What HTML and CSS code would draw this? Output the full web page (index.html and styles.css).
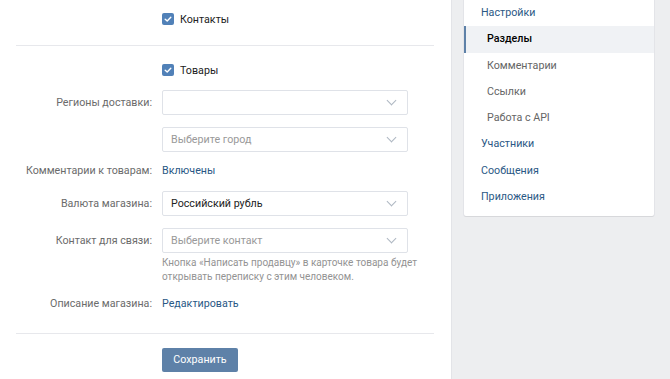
FILE: index.html
```html
<!DOCTYPE html>
<html lang="ru">
<head>
  <meta charset="UTF-8" />
  <meta name="viewport" content="width=device-width, initial-scale=1" />
  <title>Управление сообществом — Разделы</title>
  <link rel="stylesheet" href="styles.css">
</head>
<body>
  <div class="page">
    <div class="main">
      <div class="row row-check">
        <div class="label"></div>
        <div class="field">
          <span class="checkbox"><svg viewBox="0 0 12 12" width="12" height="12"><path d="M3.2 6.2l2 1.9 3.6-3.8" fill="none" stroke="#fff" stroke-width="1.4" stroke-linecap="round" stroke-linejoin="round"/></svg></span>
          <span class="check-text">Контакты</span>
        </div>
      </div>

      <div class="sep sep-top"></div>

      <div class="row row-check row-goods">
        <div class="label"></div>
        <div class="field">
          <span class="checkbox"><svg viewBox="0 0 12 12" width="12" height="12"><path d="M3.2 6.2l2 1.9 3.6-3.8" fill="none" stroke="#fff" stroke-width="1.4" stroke-linecap="round" stroke-linejoin="round"/></svg></span>
          <span class="check-text">Товары</span>
        </div>
      </div>

      <div class="row row-regions">
        <div class="label">Регионы доставки:</div>
        <div class="field">
          <div class="select"><span class="select-text"></span><span class="arrow"></span></div>
        </div>
      </div>

      <div class="row row-city">
        <div class="label"></div>
        <div class="field">
          <div class="select"><span class="select-text placeholder">Выберите город</span><span class="arrow"></span></div>
        </div>
      </div>

      <div class="row row-comments">
        <div class="label">Комментарии к товарам:</div>
        <div class="field"><a class="link" href="#">Включены</a></div>
      </div>

      <div class="row row-currency">
        <div class="label">Валюта магазина:</div>
        <div class="field">
          <div class="select"><span class="select-text">Российский рубль</span><span class="arrow"></span></div>
        </div>
      </div>

      <div class="row row-contact">
        <div class="label">Контакт для связи:</div>
        <div class="field">
          <div class="select"><span class="select-text placeholder">Выберите контакт</span><span class="arrow"></span></div>
        </div>
      </div>

      <div class="row row-hint">
        <div class="label"></div>
        <div class="hint">Кнопка «Написать продавцу» в карточке товара будет<br>открывать переписку с этим человеком.</div>
      </div>

      <div class="row row-desc">
        <div class="label">Описание магазина:</div>
        <div class="field"><a class="link" href="#">Редактировать</a></div>
      </div>

      <div class="sep sep-bottom"></div>

      <div class="row row-save">
        <div class="label"></div>
        <div class="field"><button class="btn">Сохранить</button></div>
      </div>
    </div>

    <div class="side">
      <div class="menu">
        <a class="menu-item" href="#">Настройки</a>
        <a class="menu-item sub active" href="#">Разделы</a>
        <a class="menu-item sub" href="#">Комментарии</a>
        <a class="menu-item sub" href="#">Ссылки</a>
        <a class="menu-item sub" href="#">Работа с API</a>
        <a class="menu-item" href="#">Участники</a>
        <a class="menu-item" href="#">Сообщения</a>
        <a class="menu-item" href="#">Приложения</a>
      </div>
    </div>
  </div>
</body>
</html>
```

FILE: styles.css
```css
body {
  margin: 0;
  background: #edeef0;
  font-family: Roboto, "Open Sans", Arial, sans-serif;
  font-size: 10.7px;
  color: #000;
  overflow: hidden;
}

.page {
  display: flex;
  align-items: flex-start;
  height: 379px;
}

/* === Основная панель === */
.main {
  width: 452px;
  height: 379px;
  background: #fff;
  border-right: 1px solid #e3e4e8;
  box-sizing: border-box;
  padding-top: 6px;
}

.row {
  display: flex;
  align-items: center;
  min-height: 25px;
}

.label {
  width: 162px;
  padding-right: 10px;
  box-sizing: border-box;
  text-align: right;
  color: #6b6b6b;
  flex-shrink: 0;
}

.field {
  width: 246px;
  display: flex;
  align-items: center;
}

.row-check { height: 26px; }
.row-goods { margin-top: 11px; }
.row-regions { margin-top: 7px; }
.row-city { margin-top: 12px; }
.row-comments { margin-top: 6px; }
.row-currency { margin-top: 8px; }
.row-contact { margin-top: 12px; }
.row-hint { margin-top: 3px; min-height: 0; }
.row-desc { margin-top: 7px; }
.row-save { margin-top: 13px; }

.sep {
  height: 1px;
  background: #e7e8ec;
  margin: 0 17px 0 16px;
}
.sep-top { margin-top: 13px; }
.sep-bottom { margin-top: 17px; }

.checkbox {
  width: 12px;
  height: 12px;
  border-radius: 2px;
  background: #5181b8;
  display: inline-flex;
  margin-right: 6px;
}

.check-text {
  color: #222;
}

.select {
  width: 246px;
  height: 25px;
  border: 1px solid #dfe2e8;
  border-radius: 2px;
  box-sizing: border-box;
  display: flex;
  align-items: center;
  justify-content: space-between;
  padding: 0 12px 0 8px;
  background: #fff;
}

.select-text { color: #222; }
.placeholder { color: #999; }

.arrow {
  width: 6px;
  height: 6px;
  border-right: 1px solid #aeb7c2;
  border-bottom: 1px solid #aeb7c2;
  transform: rotate(45deg);
  margin-top: -4px;
}

.link {
  color: #2a5885;
  text-decoration: none;
}

.hint {
  color: #939393;
  font-size: 10px;
  line-height: 14px;
  white-space: nowrap;
}

.btn {
  width: 76px;
  height: 24px;
  background: #5e81a8;
  color: #fff;
  border: none;
  border-radius: 2px;
  font-family: inherit;
  font-size: 10.7px;
  padding: 0;
  cursor: pointer;
}

/* === Правое меню === */
.side {
  margin-left: 12px;
  width: 190px;
}

.menu {
  background: #fff;
  box-shadow: 0 1px 0 0 #d7d8db, 0 0 0 1px #e3e4e8;
  border-radius: 0 0 2px 2px;
  padding-bottom: 6px;
}

.menu-item {
  display: block;
  height: 26.3px;
  line-height: 26.3px;
  padding-left: 17px;
  color: #2a5885;
  text-decoration: none;
}

.menu-item.sub {
  padding-left: 23px;
  color: #656565;
}

.menu-item.active {
  background: #f0f2f5;
  border-left: 2px solid #5e81a8;
  padding-left: 21px;
  color: #000;
  font-weight: 500;
}
```
